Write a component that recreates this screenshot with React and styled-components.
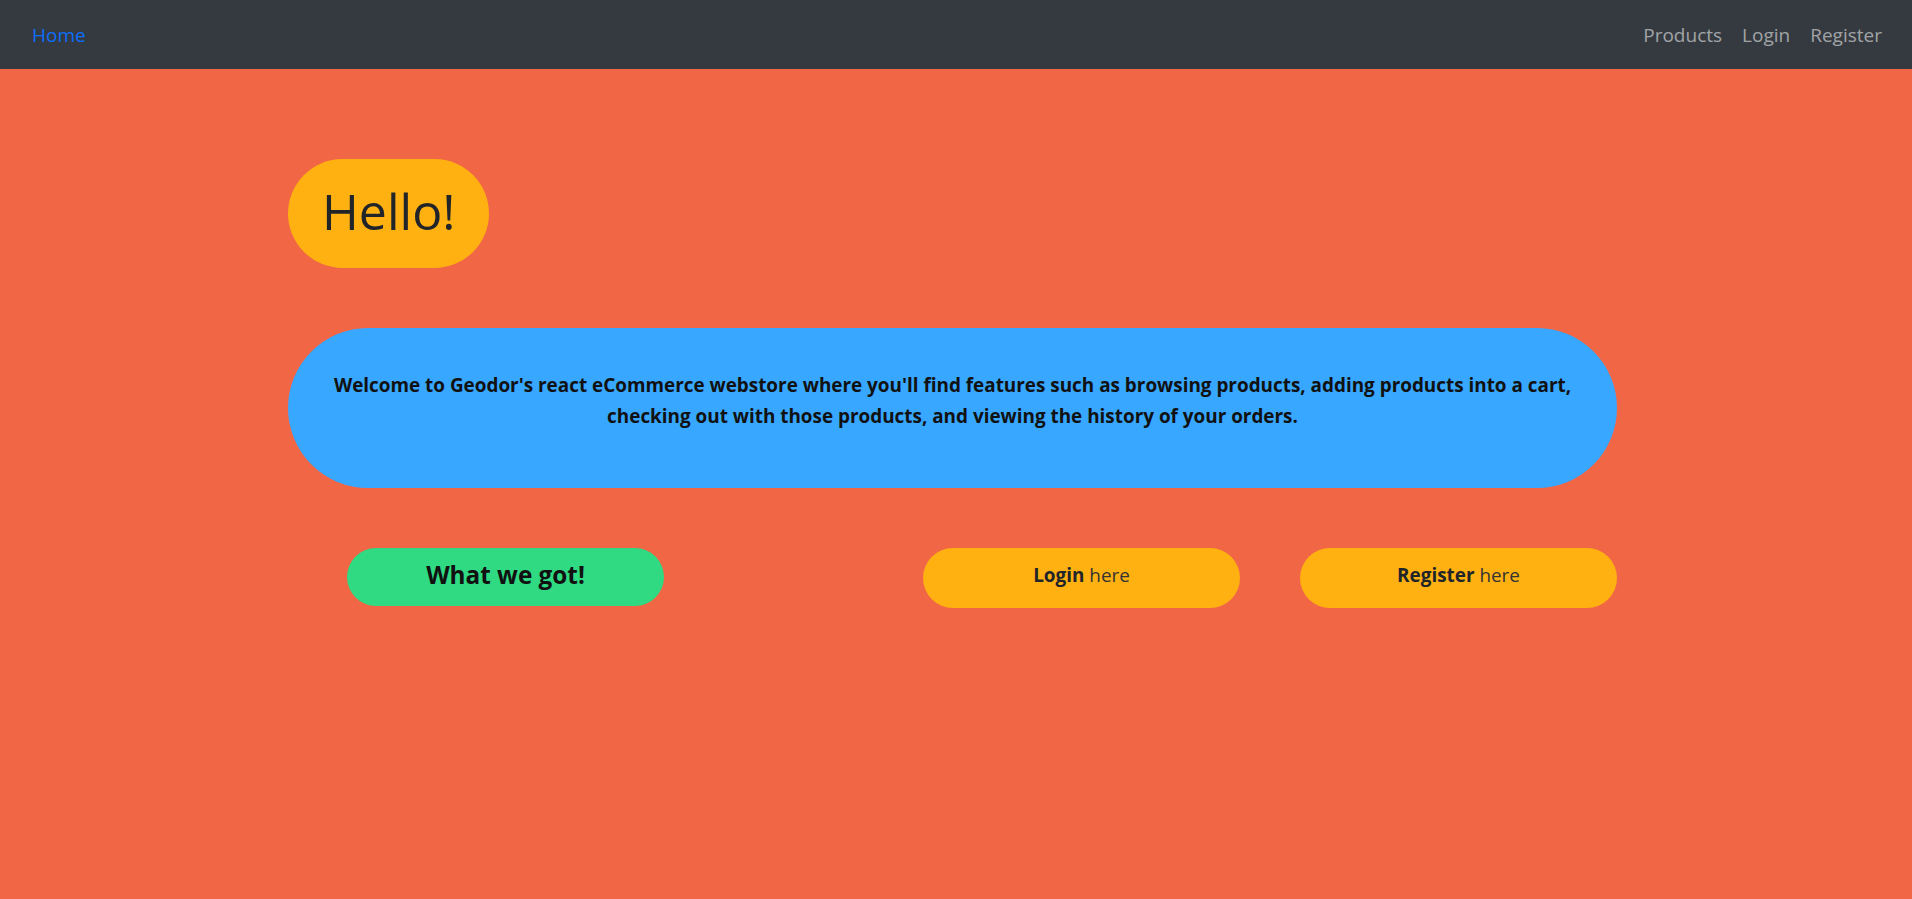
import React from "react";
import styled, { createGlobalStyle } from "styled-components";

const GlobalStyle = createGlobalStyle`
  * { box-sizing: border-box; }
  html, body {
    margin: 0;
    padding: 0;
    background: #f16645;
    font-family: "Open Sans", "Noto Sans", "Liberation Sans", sans-serif;
    color: #212529;
  }
`;

const Navbar = styled.nav`
  height: 69px;
  background: #343a40;
  display: flex;
  align-items: center;
  justify-content: space-between;
  padding: 0 30px 0 32px;
`;

const Brand = styled.a`
  color: #0d6efd;
  font-size: 19px;
  text-decoration: none;
  cursor: pointer;
`;

const NavLinks = styled.div`
  display: flex;
  align-items: center;
  gap: 20px;
`;

const NavLink = styled.a`
  color: rgba(255, 255, 255, 0.55);
  font-size: 19px;
  text-decoration: none;
  cursor: pointer;
`;

const Main = styled.main`
  padding: 90px 295px 0 288px;
  display: flex;
  flex-direction: column;
  align-items: flex-start;
`;

const HelloPill = styled.div`
  height: 109px;
  padding: 0 34px 6px;
  display: flex;
  align-items: center;
  background: #ffb111;
  border-radius: 100px;
  font-size: 50px;
  font-weight: 400;
  color: #212529;
`;

const WelcomeCard = styled.section`
  align-self: stretch;
  margin-top: 60px;
  height: 160px;
  padding: 0 20px 14px;
  display: flex;
  align-items: center;
  justify-content: center;
  background: #37a7ff;
  border-radius: 100px;
`;

const WelcomeText = styled.p`
  margin: 0;
  text-align: center;
  font-size: 18.9px;
  font-weight: 700;
  line-height: 31px;
  color: #111;
  white-space: nowrap;
`;

const ButtonRow = styled.div`
  align-self: stretch;
  margin-top: 60px;
  padding-left: 59px;
  display: flex;
  align-items: flex-start;
  justify-content: space-between;
`;

const ActionGroup = styled.div`
  display: flex;
  gap: 60px;
`;

const Pill = styled.a`
  width: 317px;
  height: ${(p) => (p.$tall ? "60px" : "58px")};
  display: flex;
  align-items: center;
  justify-content: center;
  background: ${(p) => p.$bg};
  border-radius: 100px;
  color: #212529;
  text-decoration: none;
  cursor: pointer;
`;

const PillTitle = styled.span`
  font-size: 24.3px;
  font-weight: 700;
  color: #111;
  margin-top: -6px;
`;

const PillLabel = styled.span`
  font-size: 18.9px;
  font-weight: 400;
  color: #333;
  margin-top: -6px;
  b {
    font-weight: 700;
    color: #212529;
  }
`;

export default function App() {
  return (
    <>
      <GlobalStyle />
      <Navbar>
        <Brand>Home</Brand>
        <NavLinks>
          <NavLink>Products</NavLink>
          <NavLink>Login</NavLink>
          <NavLink>Register</NavLink>
        </NavLinks>
      </Navbar>
      <Main>
        <HelloPill>Hello!</HelloPill>
        <WelcomeCard>
          <WelcomeText>
            Welcome to Geodor's react eCommerce webstore where you'll find features such as browsing products, adding products into a cart,
            <br />
            checking out with those products, and viewing the history of your orders.
          </WelcomeText>
        </WelcomeCard>
        <ButtonRow>
          <Pill $bg="#2fda82">
            <PillTitle>What we got!</PillTitle>
          </Pill>
          <ActionGroup>
            <Pill $bg="#ffb111" $tall>
              <PillLabel>
                <b>Login</b> here
              </PillLabel>
            </Pill>
            <Pill $bg="#ffb111" $tall>
              <PillLabel>
                <b>Register</b> here
              </PillLabel>
            </Pill>
          </ActionGroup>
        </ButtonRow>
      </Main>
    </>
  );
}
